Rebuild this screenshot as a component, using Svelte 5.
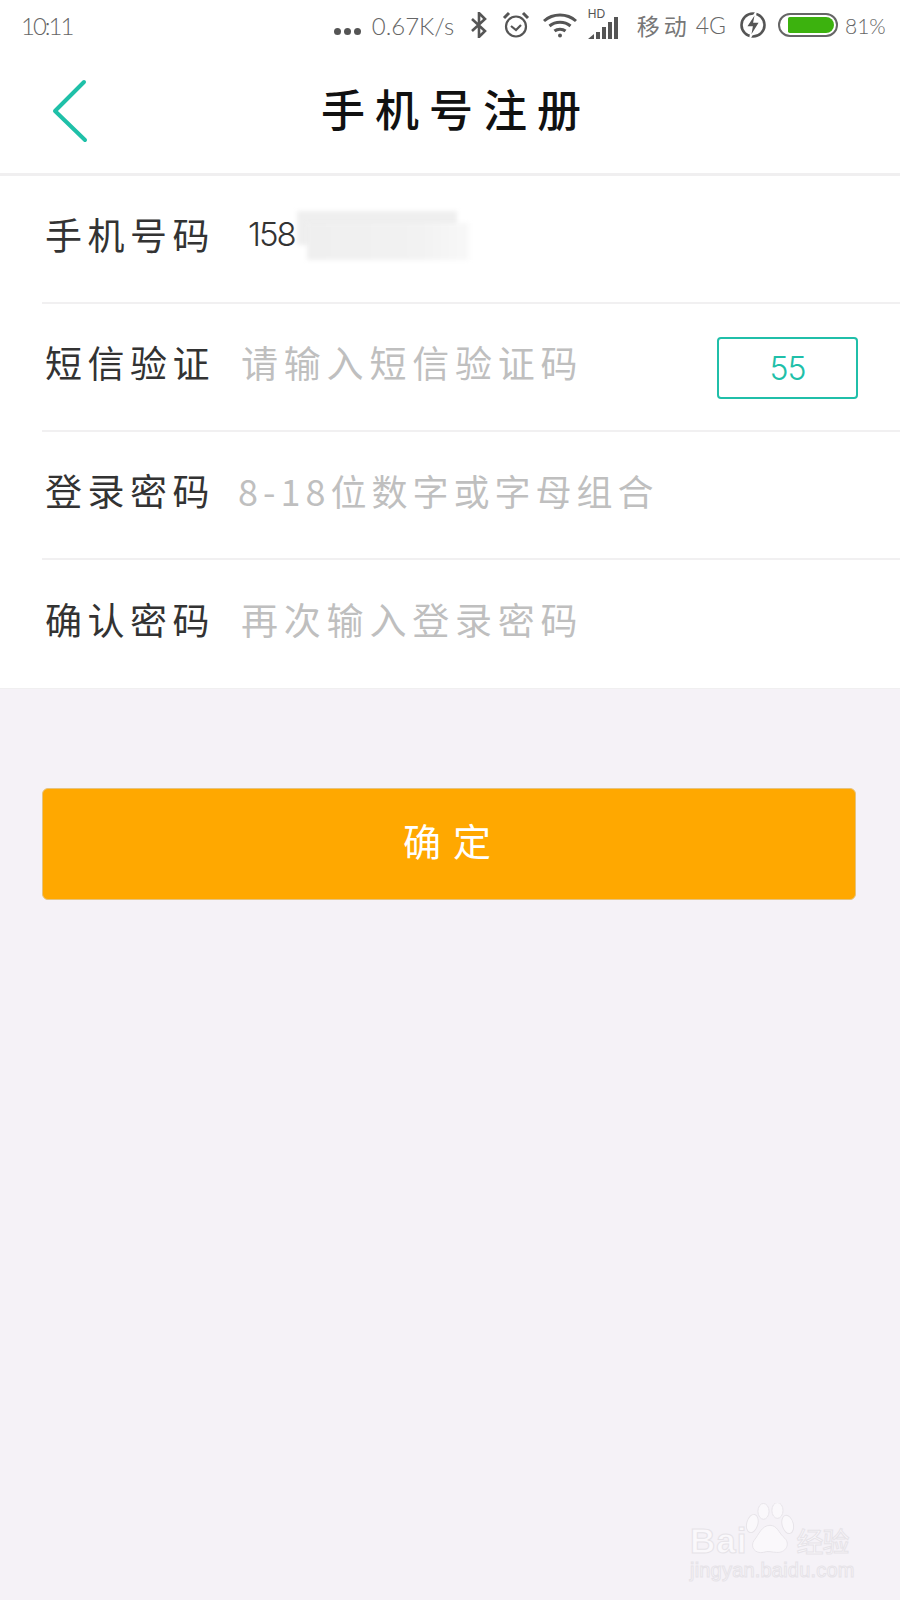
<script lang="ts">
  const rows = [
    { label: '手机号码', hint: '', value: '158' },
    { label: '短信验证', hint: '请输入短信验证码', code: '55' },
    { label: '登录密码', hint: '8-18位数字或字母组合', tight: true },
    { label: '确认密码', hint: '再次输入登录密码' }
  ];
</script>

<div class="page">
  <header class="status">
    <span class="time">10:11</span>
    <div class="status-right">
      <span class="dots"><i></i><i></i><i></i></span>
      <span class="speed">0.67K/s</span>
      <svg class="bt" width="18" height="26" viewBox="0 0 18 26" fill="none" stroke="#555" stroke-width="2.6">
        <path d="M2 7l13 12-6 6V1l6 6L2 19" />
      </svg>
      <svg class="alarm" width="28" height="28" viewBox="0 0 28 28" fill="none" stroke="#555" stroke-width="2.2">
        <circle cx="14" cy="15.5" r="10" />
        <path d="M9 15l5 4 5-5" />
        <path d="M2 7l5-5M26 7l-5-5" stroke-width="3" />
      </svg>
      <svg class="wifi" width="36" height="26" viewBox="0 0 36 26" fill="none" stroke="#555" stroke-width="3">
        <path d="M2 9c9-8 23-8 32 0M7.500 14c6-5 15-5 21 0M12.500 19c3-2.500 8-2.500 11 0" />
        <circle cx="18" cy="23.500" r="2" fill="#555" stroke="none" />
      </svg>
      <span class="signal">
        <b>HD</b>
        <svg width="32" height="22" viewBox="0 0 32 22" fill="#555">
          <path d="M0 22l6-5v5zM8 15h4v7H8zM14 10h4v12h-4zM20 5h4v17h-4zM26 0h4v22h-4z" />
        </svg>
      </span>
      <span class="carrier">移动</span>
      <span class="net">4G</span>
      <svg class="charge" width="28" height="28" viewBox="0 0 28 28">
        <circle cx="14" cy="14" r="11.500" fill="none" stroke="#555" stroke-width="2.6" />
        <path d="M17 1L7 16h6l-2 11 10-16h-6z" fill="#555" stroke="#fff" stroke-width="1.500" />
      </svg>
      <span class="battery"><span class="level"></span></span>
      <span class="percent">81%</span>
    </div>
  </header>

  <nav class="bar">
    <svg class="back" width="36" height="64" viewBox="0 0 36 64" fill="none" stroke="#1fc0a8" stroke-width="4" stroke-linecap="round" stroke-linejoin="round">
      <path d="M32 3L3 32l30 29" />
    </svg>
    <h1>手机号注册</h1>
  </nav>

  <section class="form">
    {#each rows as row}
      <div class="row">
        <span class="label">{row.label}</span>
        {#if row.value}
          <span class="value">
            {row.value}
            <span class="smudge one"></span>
            <span class="smudge two"></span>
          </span>
        {:else}
          <span class="hint" class:tight={row.tight}>{row.hint}</span>
        {/if}
        {#if row.code}
          <span class="code">{row.code}</span>
        {/if}
      </div>
    {/each}
  </section>

  <button class="submit">确定</button>

  <div class="mark">
    <div class="mark-top">
      <span class="bai">Bai</span>
      <svg width="50" height="54" viewBox="0 0 52 58" fill="#faf8fb" stroke="#e6e3e8" stroke-width="1">
        <ellipse cx="7" cy="22" rx="6" ry="10" transform="rotate(15 7 22)" />
        <ellipse cx="19" cy="9" rx="6" ry="8.500" />
        <ellipse cx="34" cy="8" rx="6" ry="8.500" />
        <ellipse cx="45" cy="23" rx="6" ry="10" transform="rotate(-15 45 23)" />
        <path d="M26 24c8 0 9 8 16 14 6 6 1 16-9 15-5 0-9-2-14 0-9 2-15-6-10-13 5-6 8-16 17-16z" />
      </svg>
      <span class="jy">经验</span>
    </div>
    <span class="site">jingyan.baidu.com</span>
  </div>
</div>

<style>
  :global(body) {
    margin: 0;
  }
  .page {
    position: relative;
    width: 900px;
    height: 1600px;
    overflow: hidden;
    background: #f5f2f7;
    font-family: "Noto Sans CJK SC", "Noto Sans", sans-serif;
  }
  .status {
    height: 50px;
    padding: 0 15px 0 21px;
    background: #fff;
    display: flex;
    align-items: center;
    justify-content: space-between;
    color: #666;
    font-family: Lato, "Noto Sans CJK SC", sans-serif;
    font-weight: 300;
  }
  .time {
    font-size: 24px;
    letter-spacing: -2px;
  }
  .status-right {
    display: flex;
    align-items: center;
  }
  .dots {
    display: flex;
    gap: 3px;
    margin-top: 12px;
  }
  .dots i {
    width: 7px;
    height: 7px;
    border-radius: 50%;
    background: #555;
  }
  .speed {
    margin-left: 11px;
    font-size: 24px;
    width: 85px;
  }
  .bt {
    margin-left: 13px;
  }
  .alarm {
    margin-left: 14px;
  }
  .wifi {
    margin-left: 12px;
  }
  .signal {
    position: relative;
    margin-left: 10px;
    width: 33px;
    height: 28px;
    display: flex;
    align-items: flex-end;
  }
  .signal b {
    position: absolute;
    left: 0;
    top: -4px;
    font-size: 12px;
    font-family: "Liberation Sans", sans-serif;
    color: #555;
  }
  .carrier {
    margin-left: 16px;
    font-size: 23px;
    letter-spacing: 4px;
    width: 52px;
    font-weight: 400;
    color: #777;
    white-space: nowrap;
  }
  .net {
    margin-left: 7px;
    font-size: 23px;
  }
  .charge {
    margin-left: 13px;
  }
  .battery {
    margin-left: 11px;
    box-sizing: border-box;
    width: 60px;
    height: 24px;
    border: 2px solid #666;
    border-radius: 12px;
    padding: 2px;
    display: flex;
  }
  .level {
    flex: 1;
    background: #3cb20e;
    border-radius: 2px 9px 9px 2px;
    margin-left: 6px;
  }
  .percent {
    margin-left: 7px;
    font-size: 21px;
    width: 40px;
  }
  .bar {
    position: relative;
    height: 123px;
    background: #fff;
    border-bottom: 3px solid #f0eff0;
    display: flex;
    align-items: center;
    justify-content: center;
  }
  .back {
    position: absolute;
    left: 52px;
    top: 29px;
  }
  h1 {
    margin: 0 0 8px 12px;
    font-size: 44px;
    font-weight: 500;
    letter-spacing: 10px;
    color: #111;
  }
  .form {
    background: #fff;
    padding-left: 42px;
    height: 512px;
    display: grid;
    grid-auto-rows: 128px;
    border-bottom: 1px solid #f0eff0;
  }
  .row {
    position: relative;
    display: flex;
    align-items: center;
    border-bottom: 2px solid #f1f0f1;
    padding-bottom: 11px;
    box-sizing: border-box;
  }
  .row:last-child {
    border-bottom: 0;
  }
  .label {
    width: 199px;
    padding-left: 3px;
    flex: none;
    box-sizing: border-box;
    font-size: 37px;
    letter-spacing: 5.500px;
    color: #333;
    white-space: nowrap;
  }
  .value {
    position: relative;
    margin-left: 7px;
    font-family: Inter, sans-serif;
    font-size: 33px;
    font-weight: 300;
    letter-spacing: -2px;
    color: #333;
  }
  .smudge {
    position: absolute;
    background: #efefef;
    filter: blur(2px);
  }
  .one {
    left: 49px;
    top: -3px;
    width: 160px;
    height: 34px;
  }
  .two {
    left: 59px;
    top: 9px;
    width: 162px;
    height: 37px;
    background: linear-gradient(90deg, #efefef, #f2f2f2 70%, #f8f8f8);
  }
  .hint {
    font-size: 37px;
    letter-spacing: 5.800px;
    color: #bfbfbf;
    white-space: nowrap;
  }
  .hint.tight {
    margin-left: -3px;
    font-size: 36px;
    letter-spacing: 5px;
  }
  .code {
    position: absolute;
    right: 42px;
    top: 33px;
    box-sizing: border-box;
    width: 141px;
    height: 62px;
    border: 2px solid #20bfa9;
    border-radius: 4px;
    display: flex;
    align-items: center;
    justify-content: center;
    color: #20bfa9;
    font-family: Inter, sans-serif;
    font-weight: 300;
    font-size: 32px;
    letter-spacing: -1px;
  }
  .submit {
    display: block;
    box-sizing: border-box;
    width: 814px;
    height: 112px;
    margin: 99px 0 0 42px;
    padding: 0 0 10px 8px;
    border: 1px solid #e6c37e;
    border-radius: 6px;
    background: #ffa800;
    color: #fff;
    font-family: inherit;
    font-size: 38px;
    letter-spacing: 12px;
  }
  .mark {
    position: absolute;
    left: 690px;
    top: 1503px;
    width: 165px;
    color: #faf8fb;
    -webkit-text-stroke: 1px #e6e3e8;
  }
  .mark-top {
    display: flex;
    align-items: flex-end;
    height: 54px;
  }
  .mark-top svg {
    flex: none;
    margin-left: -2px;
  }
  .bai {
    font-family: "Liberation Sans", sans-serif;
    font-weight: 700;
    font-size: 35px;
    line-height: 32px;
    letter-spacing: 1px;
  }
  .jy {
    margin-left: 1px;
    font-size: 27px;
    line-height: 32px;
    letter-spacing: -1px;
    white-space: nowrap;
  }
  .site {
    display: block;
    margin-top: 2px;
    font-family: "Liberation Sans", sans-serif;
    font-size: 20px;
    line-height: 22px;
    letter-spacing: 0.2px;
    white-space: nowrap;
  }
</style>
